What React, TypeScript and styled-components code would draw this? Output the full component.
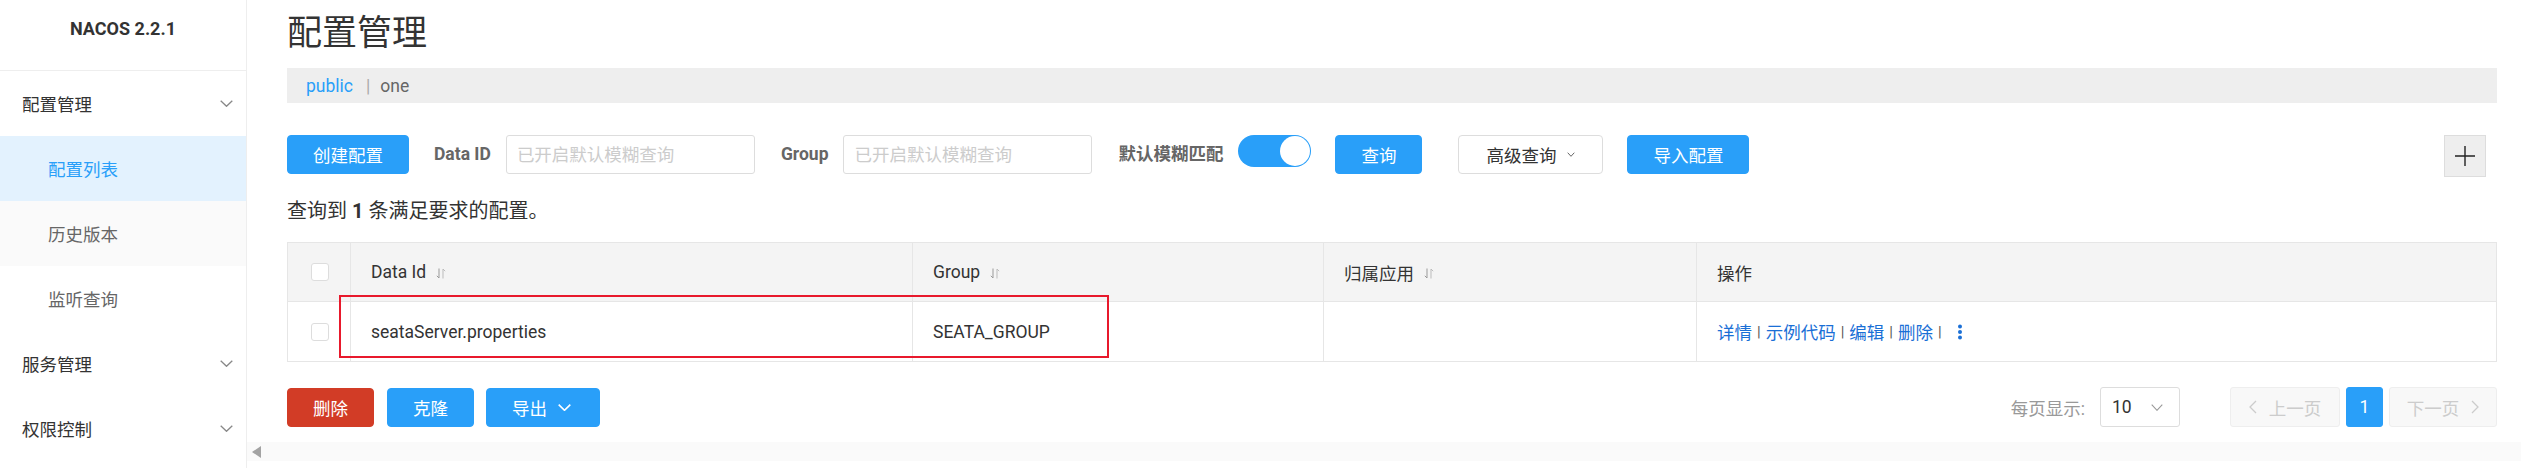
import React from "react";
import styled, { createGlobalStyle } from "styled-components";

const FONT = `Roboto, "Noto Sans CJK SC", "Liberation Sans", sans-serif`;
const PRIMARY = "#299ff9";

const Global = createGlobalStyle`
  html, body { margin: 0; padding: 0; background: #fff; }
  body { font-family: ${FONT}; font-size: 17.5px; color: #333; }
  * { box-sizing: border-box; }
`;

const Root = styled.div`
  display: flex;
  height: 100vh;
  overflow: hidden;
`;

const Sidebar = styled.aside`
  width: 247px;
  flex-shrink: 0;
  border-right: 1px solid #eee;
  display: flex;
  flex-direction: column;
`;

const Logo = styled.div`
  height: 71px;
  border-bottom: 1px solid #eee;
  padding-top: 17px;
  text-align: center;
  font-weight: 700;
  font-size: 18px;
  line-height: 24px;
  color: #333;
`;

const MenuItem = styled.div<{ $sub?: boolean; $active?: boolean; $hover?: boolean }>`
  height: 65px;
  display: flex;
  align-items: center;
  justify-content: space-between;
  padding: 0 13px 0 ${(p) => (p.$sub ? "48px" : "22px")};
  font-size: 17.5px;
  color: ${(p) => (p.$active ? PRIMARY : p.$sub ? "#666" : "#333")};
  background: ${(p) => (p.$active ? "#e3f2fe" : p.$hover ? "#fafafa" : "transparent")};
`;

const Main = styled.main`
  flex: 1;
  min-width: 0;
  display: flex;
  flex-direction: column;
`;

const Content = styled.div`
  padding: 0 24px 0 40px;
  display: flex;
  flex-direction: column;
`;

const Title = styled.h1`
  margin: 12px 0 0;
  font-size: 35px;
  line-height: 44px;
  font-weight: 400;
  color: #333;
`;

const Crumb = styled.div`
  margin-top: 12px;
  height: 35px;
  background: #eee;
  display: flex;
  align-items: center;
  padding-left: 19px;
  font-size: 17.5px;
`;

const CrumbLink = styled.span`
  color: ${PRIMARY};
`;

const CrumbSep = styled.span`
  color: #aaa;
  margin: 0 10px 0 13px;
`;

const CrumbText = styled.span`
  color: #666;
`;

const Toolbar = styled.div`
  margin-top: 32px;
  display: flex;
  align-items: flex-start;
  height: 42px;
`;

const Btn = styled.button<{ $kind?: "primary" | "danger" | "normal"; $mr?: number }>`
  height: 39px;
  padding: 0 25px;
  border-radius: 4px;
  font-family: ${FONT};
  font-size: 17.5px;
  display: inline-flex;
  align-items: center;
  gap: 11px;
  cursor: pointer;
  margin-right: ${(p) => (p.$mr ?? 25)}px;
  border: 1px solid
    ${(p) => (p.$kind === "danger" ? "#d23c26" : p.$kind === "normal" ? "#ddd" : PRIMARY)};
  background: ${(p) => (p.$kind === "danger" ? "#d23c26" : p.$kind === "normal" ? "#fff" : PRIMARY)};
  color: ${(p) => (p.$kind === "normal" ? "#333" : "#fff")};
`;

const Label = styled.label`
  font-weight: 700;
  color: #666;
  line-height: 39px;
  margin-right: 15px;
  white-space: nowrap;
`;

const Input = styled.input`
  width: 249px;
  height: 39px;
  border: 1px solid #ddd;
  border-radius: 3px;
  padding: 0 10px;
  font-family: ${FONT};
  font-size: 17.5px;
  margin-right: 26px;
  &::placeholder { color: #ccc; }
`;

const Switch = styled.div`
  width: 73px;
  height: 32px;
  border-radius: 16px;
  background: ${PRIMARY};
  position: relative;
  margin-right: 24px;
  flex-shrink: 0;
`;

const Knob = styled.span`
  position: absolute;
  right: 1px;
  top: 1px;
  width: 30px;
  height: 30px;
  border-radius: 50%;
  background: #fff;
`;

const PlusBtn = styled.div`
  margin-left: auto;
  margin-right: 11px;
  width: 42px;
  height: 42px;
  background: #eee;
  border: 1px solid #ddd;
  display: flex;
  align-items: center;
  justify-content: center;
`;

const Result = styled.div`
  margin-top: 22px;
  line-height: 24px;
  font-size: 20px;
  color: #333;
  b { font-weight: 700; }
`;

const Table = styled.div`
  margin-top: 19px;
  position: relative;
  border: 1px solid #e6e6e6;
  border-bottom: none;
`;

const Row = styled.div<{ $head?: boolean }>`
  display: grid;
  grid-template-columns: 62px 562px 411px 373px 1fr;
  height: ${(p) => (p.$head ? 59 : 60)}px;
  background: ${(p) => (p.$head ? "#f4f4f4" : "#fff")};
  border-bottom: 1px solid #e6e6e6;
`;

const Cell = styled.div<{ $check?: boolean }>`
  display: flex;
  align-items: center;
  justify-content: ${(p) => (p.$check ? "center" : "flex-start")};
  padding: ${(p) => (p.$check ? "0" : "0 20px")};
  border-left: 1px solid #e6e6e6;
  &:first-child { border-left: none; }
  color: #333;
  white-space: nowrap;
`;

const Check = styled.span`
  width: 18px;
  height: 18px;
  border: 1px solid #ddd;
  border-radius: 3px;
  background: #fff;
  margin-left: 2px;
`;

const SortIcon = styled.svg`
  margin-left: 10px;
  margin-top: 2px;
`;

const Ops = styled.div`
  display: flex;
  align-items: center;
  color: #1a6fd6;
`;

const OpSep = styled.span`
  color: #555;
  margin: 0 5px;
  font-size: 15px;
`;

const Highlight = styled.div`
  position: absolute;
  left: 51px;
  top: 52px;
  width: 770px;
  height: 63px;
  border: 2px solid #e8192c;
  pointer-events: none;
`;

const Bottom = styled.div`
  margin-top: 25px;
  display: flex;
  align-items: center;
  height: 40px;
`;

const PageSize = styled.span`
  margin-left: auto;
  color: #999;
  margin-right: 15px;
`;

const Select = styled.div`
  width: 80px;
  height: 40px;
  border: 1px solid #ddd;
  border-radius: 3px;
  display: flex;
  align-items: center;
  justify-content: space-between;
  padding: 0 16px 0 11px;
  color: #333;
  margin-right: 50px;
`;

const PageBtn = styled.div<{ $current?: boolean; $w: number }>`
  width: ${(p) => p.$w}px;
  height: 40px;
  border-radius: 3px;
  display: flex;
  align-items: center;
  justify-content: center;
  gap: 12px;
  border: 1px solid ${(p) => (p.$current ? PRIMARY : "#eee")};
  background: ${(p) => (p.$current ? PRIMARY : "#f8f8f8")};
  color: ${(p) => (p.$current ? "#fff" : "#ccc")};
  margin-left: 6px;
`;

const ScrollTrack = styled.div`
  margin-top: 15px;
  height: 19px;
  background: #fafafa;
  display: flex;
  align-items: center;
  padding-left: 5px;
`;

const Chevron = ({ color = "#888", w = 13, h = 7, sw = 1.3 }: { color?: string; w?: number; h?: number; sw?: number }) => (
  <svg width={w} height={h} viewBox={`0 0 ${w} ${h}`} fill="none">
    <path d={`M0.7 0.7 L${w / 2} ${h - 0.7} L${w - 0.7} 0.7`} stroke={color} strokeWidth={sw} />
  </svg>
);

const Side = ({ dir, color = "#ccc" }: { dir: "l" | "r"; color?: string }) => (
  <svg width="8" height="14" viewBox="0 0 8 14" fill="none">
    <path d={dir === "l" ? "M7 1 L1 7 L7 13" : "M1 1 L7 7 L1 13"} stroke={color} strokeWidth="1.3" />
  </svg>
);

const Sort = () => (
  <SortIcon width="10" height="11" viewBox="0 0 10 11" fill="none">
    <path d="M3 0.5 V10 L0.8 7.8" stroke="#999" strokeWidth="1" />
    <path d="M7 10.5 V1 L9.2 3.2" stroke="#bbb" strokeWidth="1" />
  </SortIcon>
);

const Dots = () => (
  <svg width="6" height="16" viewBox="0 0 6 16" style={{ marginLeft: 10 }}>
    <circle cx="3" cy="2.5" r="2" fill="#1a6fd6" />
    <circle cx="3" cy="8" r="2" fill="#1a6fd6" />
    <circle cx="3" cy="13.5" r="2" fill="#1a6fd6" />
  </svg>
);

export default function App() {
  return (
    <Root>
      <Global />
      <Sidebar>
        <Logo>NACOS 2.2.1</Logo>
        <MenuItem>
          配置管理 <Chevron />
        </MenuItem>
        <MenuItem $sub $active>配置列表</MenuItem>
        <MenuItem $sub $hover>历史版本</MenuItem>
        <MenuItem $sub>监听查询</MenuItem>
        <MenuItem>
          服务管理 <Chevron />
        </MenuItem>
        <MenuItem>
          权限控制 <Chevron />
        </MenuItem>
      </Sidebar>
      <Main>
        <Content>
          <Title>配置管理</Title>
          <Crumb>
            <CrumbLink>public</CrumbLink>
            <CrumbSep>|</CrumbSep>
            <CrumbText>one</CrumbText>
          </Crumb>
          <Toolbar>
            <Btn $kind="primary">创建配置</Btn>
            <Label>Data ID</Label>
            <Input placeholder="已开启默认模糊查询" />
            <Label>Group</Label>
            <Input placeholder="已开启默认模糊查询" />
            <Label>默认模糊匹配</Label>
            <Switch>
              <Knob />
            </Switch>
            <Btn $kind="primary" $mr={36}>查询</Btn>
            <Btn $kind="normal" style={{ padding: "0 27px" }} $mr={24}>
              高级查询 <Chevron w={8} h={5} color="#666" sw={1} />
            </Btn>
            <Btn $kind="primary">导入配置</Btn>
            <PlusBtn>
              <svg width="20" height="20" viewBox="0 0 20 20">
                <path d="M10 0 V20 M0 10 H20" stroke="#222" strokeWidth="1.4" />
              </svg>
            </PlusBtn>
          </Toolbar>
          <Result>
            查询到 <b>1</b> 条满足要求的配置。
          </Result>
          <Table>
            <Row $head>
              <Cell $check>
                <Check />
              </Cell>
              <Cell>
                Data Id <Sort />
              </Cell>
              <Cell>
                Group <Sort />
              </Cell>
              <Cell>
                归属应用 <Sort />
              </Cell>
              <Cell>操作</Cell>
            </Row>
            <Row>
              <Cell $check>
                <Check />
              </Cell>
              <Cell>seataServer.properties</Cell>
              <Cell>SEATA_GROUP</Cell>
              <Cell />
              <Cell>
                <Ops>
                  详情<OpSep>|</OpSep>示例代码<OpSep>|</OpSep>编辑<OpSep>|</OpSep>删除<OpSep>|</OpSep>
                  <Dots />
                </Ops>
              </Cell>
            </Row>
            <Highlight />
          </Table>
          <Bottom>
            <Btn $kind="danger" $mr={13}>删除</Btn>
            <Btn $kind="primary" $mr={12}>克隆</Btn>
            <Btn $kind="primary" style={{ paddingRight: 28 }}>
              导出 <Chevron color="#fff" w={13} h={7} sw={1.6} />
            </Btn>
            <PageSize>每页显示:</PageSize>
            <Select>
              10 <Chevron color="#999" w={12} h={7} sw={1.1} />
            </Select>
            <PageBtn $w={110} style={{ marginLeft: 0 }}>
              <Side dir="l" /> 上一页
            </PageBtn>
            <PageBtn $w={37} $current>1</PageBtn>
            <PageBtn $w={108}>
              下一页 <Side dir="r" />
            </PageBtn>
          </Bottom>
        </Content>
        <ScrollTrack>
          <svg width="10" height="12" viewBox="0 0 10 12">
            <path d="M9 0 V12 L0 6 Z" fill="#a3a3a3" />
          </svg>
        </ScrollTrack>
      </Main>
    </Root>
  );
}
